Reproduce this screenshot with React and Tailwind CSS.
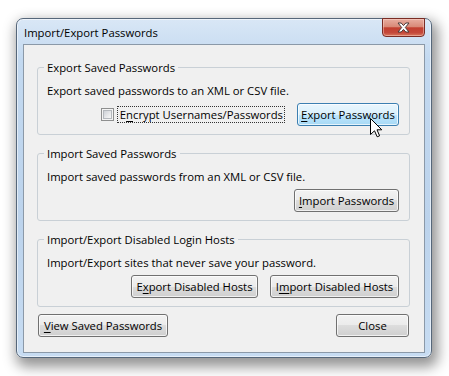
import React from "react";

const Key = ({ children }) => (
  <span className="underline decoration-1 underline-offset-[2px]">{children}</span>
);

const Button = ({ className = "", hover = false, children }) => (
  <button
    type="button"
    className={
      (hover
        ? "border-[#3c7fb1] bg-[linear-gradient(to_bottom,#eaf6fd_0%,#d9f0fc_50%,#bee6fd_50%,#a7d9f5_100%)] "
        : "border-[#707070] bg-[linear-gradient(to_bottom,#f2f2f2_0%,#ebebeb_50%,#dddddd_50%,#cfcfcf_100%)] ") +
      "flex h-[23px] shrink-0 items-center justify-center rounded-[3px] border text-[11.3px] leading-[15px] text-black shadow-[inset_0_0_0_1px_rgba(255,255,255,0.7)] " +
      className
    }
  >
    {children}
  </button>
);

const Group = ({ title, text, children }) => (
  <fieldset className="w-[373px] rounded-[3px] border border-[#c9d0d6]">
    <legend className="ml-[6px] px-[3px] leading-[15px]">{title}</legend>
    <div className="pb-[8px] pl-[9px] pr-[10px] pt-[8px]">
      <p className="leading-[15px]">{text}</p>
      <div className="mt-[5px] flex items-center justify-end">{children}</div>
    </div>
  </fieldset>
);

const Checkbox = () => (
  <span className="flex h-[13px] w-[13px] shrink-0 items-center justify-center border border-[#8e8f8f] bg-[#f4f4f4]">
    <span className="h-[9px] w-[9px] border border-[#b4b8bd] bg-[linear-gradient(135deg,#cdd1d6_0%,#e8e9eb_60%,#f7f7f7_100%)]" />
  </span>
);

const CloseX = () => (
  <svg width="13" height="11" viewBox="0 0 13 11">
    <path
      d="M1 1 H4.2 L6.5 3.6 L8.8 1 H12 L8.3 5.5 L12 10 H8.8 L6.5 7.4 L4.2 10 H1 L4.7 5.5 Z"
      fill="#ffffff"
      stroke="#4a3a38"
      strokeWidth="1"
      strokeLinejoin="round"
    />
  </svg>
);

const Cursor = () => (
  <svg width="13" height="20" viewBox="0 0 13 20" className="absolute left-[370px] top-[118px]">
    <path
      d="M0.5 0.5 V16.5 L4.5 12.8 L7.2 18.8 L9.6 17.8 L7 11.8 H11.8 Z"
      fill="#ffffff"
      stroke="#000000"
      strokeWidth="1"
    />
  </svg>
);

export default function App() {
  return (
    <div className="relative h-[376px] w-[449px] overflow-hidden bg-white pl-[16px] pt-[18px] font-['Open_Sans','Noto_Sans',sans-serif] text-[11.3px] text-black">
      <div className="flex h-[340px] w-[416px] flex-col rounded-[7px] border border-[#56677a] bg-[linear-gradient(to_bottom,#d9e7f6_0%,#c3d9f0_12%,#bcd3ec_60%,#c7dcf2_100%)] pb-[4px] shadow-[3px_6px_13px_3px_rgba(0,0,0,0.42),inset_0_0_0_1px_rgba(255,255,255,0.55)]">
        <div className="flex h-[25px] shrink-0 items-start justify-between">
          <span className="pl-[7px] pt-[6px] leading-[15px]">Import/Export Passwords</span>
          <span className="mr-[6px] -mt-px flex h-[19px] w-[43px] items-center justify-center rounded-b-[4px] border border-[#7a2c24] bg-[linear-gradient(to_bottom,#e8ada0_0%,#d98a78_45%,#c23f2f_52%,#c4483a_80%,#d8775c_100%)] shadow-[inset_0_0_0_1px_rgba(255,220,210,0.45)]">
            <CloseX />
          </span>
        </div>
        <div className="mx-[6px] flex-1 border border-[#8b99a8] bg-[#f0f0f0] pl-[13px] pt-[15px]">
          <div className="flex flex-col gap-[11px]">
            <Group title="Export Saved Passwords" text="Export saved passwords to an XML or CSV file.">
              <Checkbox />
              <span className="ml-[3px] mr-[12px] border border-dotted border-[#333333] pl-[2px] pr-[1px] leading-[15px]">
                E<Key>n</Key>crypt Usernames/Passwords
              </span>
              <Button hover className="w-[102px]">
                <Key>E</Key>xport Passwords
              </Button>
            </Group>
            <Group title="Import Saved Passwords" text="Import saved passwords from an XML or CSV file.">
              <Button className="w-[105px]">
                <Key>I</Key>mport Passwords
              </Button>
            </Group>
            <Group
              title="Import/Export Disabled Login Hosts"
              text="Import/Export sites that never save your password."
            >
              <Button className="w-[127px]">
                E<Key>x</Key>port Disabled Hosts
              </Button>
              <Button className="ml-[12px] w-[129px]">
                I<Key>m</Key>port Disabled Hosts
              </Button>
            </Group>
          </div>
          <div className="mt-[7px] flex w-[373px] justify-between px-[1px]">
            <Button className="w-[130px]">
              <Key>V</Key>iew Saved Passwords
            </Button>
            <Button className="w-[73px]">Close</Button>
          </div>
        </div>
      </div>
      <Cursor />
    </div>
  );
}
